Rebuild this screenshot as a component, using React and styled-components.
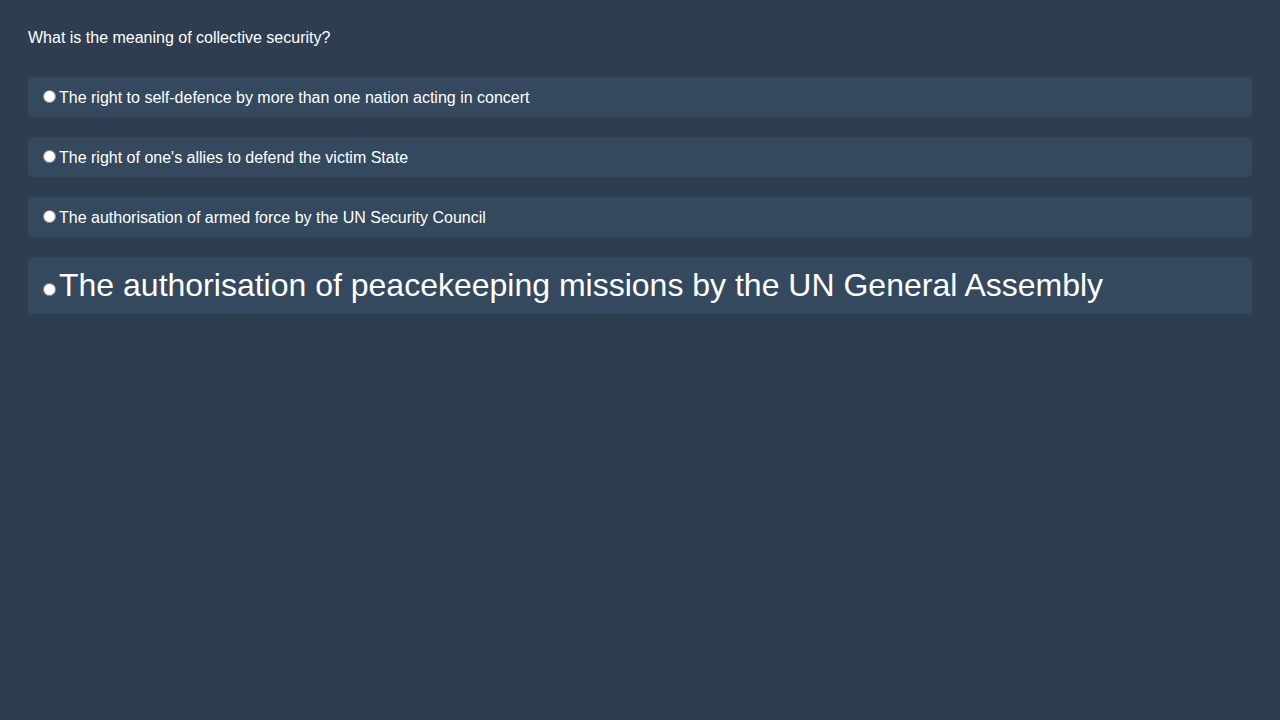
import React from "react";
import styled, { createGlobalStyle } from "styled-components";

const options = [
  { text: "The right to self-defence by more than one nation acting in concert" },
  { text: "The right of one's allies to defend the victim State" },
  { text: "The authorisation of armed force by the UN Security Council" },
  { text: "The authorisation of peacekeeping missions by the UN General Assembly", big: true },
];

const GlobalStyle = createGlobalStyle`
  html, body {
    margin: 0;
    background: #2e3d50;
    font-family: "Liberation Sans", Arial, sans-serif;
  }
`;

const App = () => {
  return (
    <Page>
      <GlobalStyle />
      <Question>What is the meaning of collective security?</Question>
      <List>
        {options.map((o, i) => (
          <Option key={i} $big={o.big}>
            <Radio type="radio" name="answer" />
            {o.text}
          </Option>
        ))}
      </List>
    </Page>
  );
};

const Page = styled.div`
  min-height: 720px;
  box-sizing: border-box;
  padding: 29px 28px 28px;
  background: #2e3d50;
  color: #ffffff;
`;

const Question = styled.div`
  font-size: 16px;
  line-height: 18px;
`;

const List = styled.div`
  display: flex;
  flex-direction: column;
  gap: 20px;
  margin-top: 30px;
`;

const Option = styled.label`
  display: block;
  padding: 10px;
  background: #34495e;
  border-radius: 4px;
  font-size: ${(p) => (p.$big ? "32px" : "16px")};
  line-height: ${(p) => (p.$big ? "37px" : "18px")};
  cursor: pointer;
`;

const Radio = styled.input`
  margin: 3px 3px 0 5px;
  width: 13px;
  height: 13px;
`;

export default App;
